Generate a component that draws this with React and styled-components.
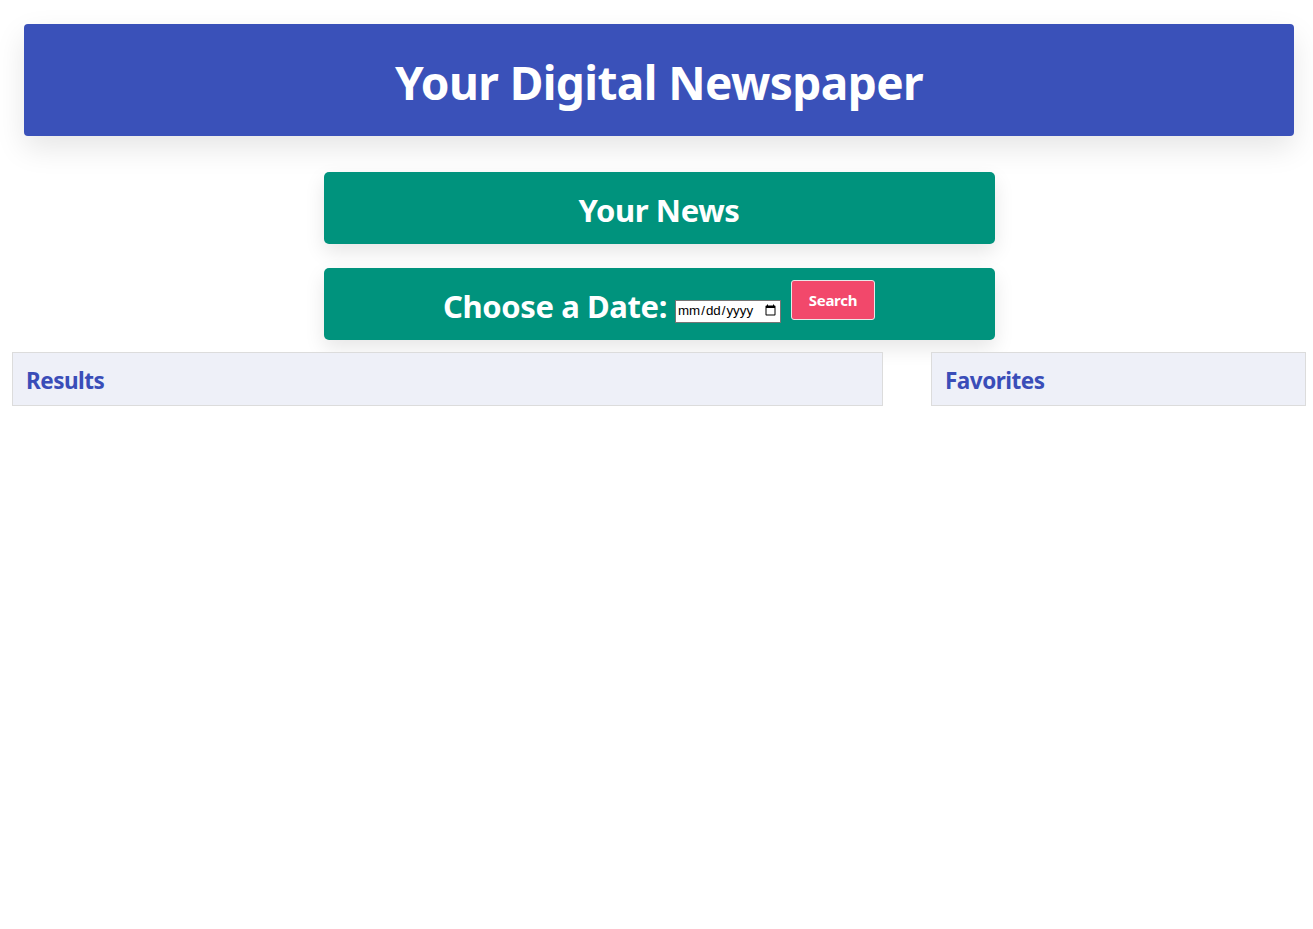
import React, { useState } from 'react'
import styled, { createGlobalStyle } from 'styled-components'

const GlobalStyle = createGlobalStyle`
  body {
    margin: 0;
    background: #fff;
    font-family: "Noto Sans", "Open Sans", sans-serif;
  }
`

const Page = styled.div`
  display: flex;
  flex-direction: column;
  padding-top: 24px;
`

const Header = styled.header`
  margin: 0 19px 0 24px;
  height: 112px;
  background: #3a51b9;
  border-radius: 4px;
  box-shadow: 0 12px 30px rgba(0, 0, 0, 0.1);
  display: flex;
  align-items: center;
  justify-content: center;
`

const Title = styled.h1`
  margin: 4px 0 0;
  color: #fff;
  font-size: 46px;
  font-weight: 700;
  letter-spacing: -0.6px;
`

const Controls = styled.div`
  margin: 36px 19px 0 24px;
  display: flex;
  flex-direction: column;
  align-items: center;
  gap: 24px;
`

const Panel = styled.div`
  width: 671px;
  height: 72px;
  background: #00937d;
  border-radius: 5px;
  box-shadow: 0 8px 20px rgba(0, 0, 0, 0.1);
  display: flex;
  align-items: center;
  justify-content: center;
  color: #fff;
  font-size: 31px;
  font-weight: 700;
  letter-spacing: -0.4px;
`

const PanelText = styled.span`
  margin-top: 3px;
`

const DateInput = styled.input`
  margin: 14px 0 0 8px;
  width: 106px;
  height: 23px;
  box-sizing: border-box;
  font-family: "Liberation Sans", Arial, sans-serif;
  font-size: 13.33px;
  border: 1px solid #767676;
  padding: 0 1px;
`

const SearchButton = styled.button`
  margin: -8px 0 0 10px;
  width: 84px;
  height: 40px;
  background: #f2486b;
  color: #fff;
  border: 1px solid #e8e8e8;
  border-radius: 3px;
  font-family: "Noto Sans", sans-serif;
  font-size: 15px;
  font-weight: 700;
  letter-spacing: -0.3px;
  cursor: pointer;
`

const Columns = styled.div`
  margin-top: 12px;
  padding: 0 7px 0 12px;
  display: flex;
  gap: 48px;
`

const Column = styled.section`
  width: ${p => p.width}px;
  height: 54px;
  box-sizing: border-box;
  background: #eef0f8;
  border: 1px solid #dcdcdc;
  display: flex;
  align-items: center;
  padding: 2px 0 0 13px;
`

const ColumnTitle = styled.h3`
  margin: 0;
  color: #3a4db8;
  font-size: 22.5px;
  font-weight: 700;
  letter-spacing: -0.5px;
`

export default function App() {
  const [date, setDate] = useState('')

  return (
    <Page>
      <GlobalStyle />
      <Header>
        <Title>Your Digital Newspaper</Title>
      </Header>
      <Controls>
        <Panel>
          <PanelText>Your News</PanelText>
        </Panel>
        <Panel>
          <PanelText>Choose a Date:</PanelText>
          <DateInput type="date" value={date} onChange={e => setDate(e.target.value)} />
          <SearchButton>Search</SearchButton>
        </Panel>
      </Controls>
      <Columns>
        <Column width={871}>
          <ColumnTitle>Results</ColumnTitle>
        </Column>
        <Column width={375}>
          <ColumnTitle>Favorites</ColumnTitle>
        </Column>
      </Columns>
    </Page>
  )
}
